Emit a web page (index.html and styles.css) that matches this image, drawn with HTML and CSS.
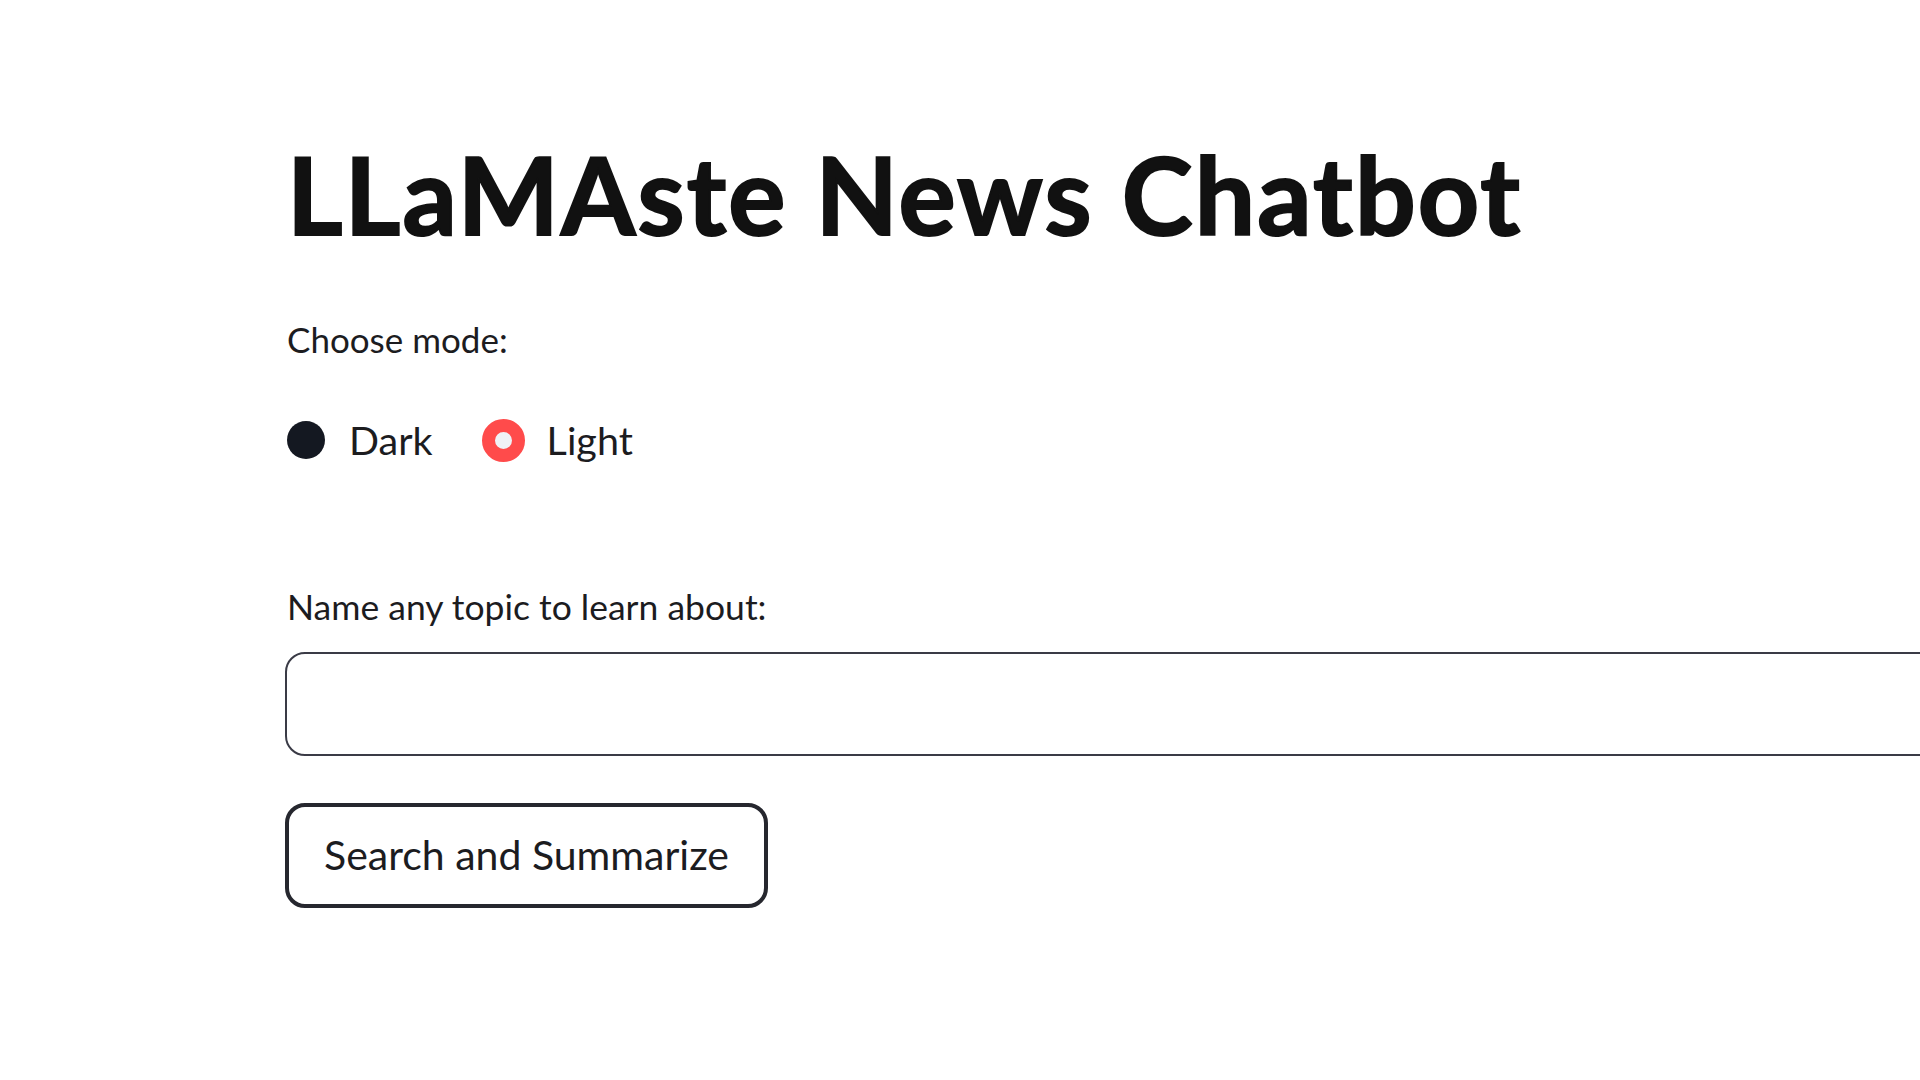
FILE: index.html
```html
<!DOCTYPE html>
<html lang="en">

<head>
    <meta charset="UTF-8">
    <title>LLaMAste News Chatbot</title>
    <link rel="stylesheet" href="styles.css">
</head>

<body>
    <div class="main">
        <h1 class="title">LLaMAste News Chatbot</h1>

        <div class="field mode-field">
            <div class="label">Choose mode:</div>
            <div class="radio-group">
                <label class="radio">
                    <span class="dot"></span>
                    <span class="radio-text">Dark</span>
                </label>
                <label class="radio checked">
                    <span class="dot"></span>
                    <span class="radio-text">Light</span>
                </label>
            </div>
        </div>

        <div class="field topic-field">
            <div class="label">Name any topic to learn about:</div>
            <input class="text-input" type="text">
        </div>

        <button class="btn">Search and Summarize</button>
    </div>
</body>

</html>
```

FILE: styles.css
```css
*,
*::before {
    margin: 0;
    padding: 0;
    box-sizing: border-box;
}

html,
body {
    width: 100%;
    height: 100%;
    overflow: hidden;
    background: #fff;
}

body {
    font-family: Lato, "Noto Sans", sans-serif;
    color: #1c1c1f;
}

.main {
    padding: 130px 0 0 285px;
    width: 2100px;
}

.title {
    font-size: 107px;
    line-height: 1.2;
    font-weight: 700;
    color: #111;
    padding-left: 2px;
    letter-spacing: 2.15px;
    -webkit-text-stroke: 2px #111;
}

.label {
    font-size: 35px;
    line-height: 42px;
    padding-left: 2px;
}

.mode-field {
    margin-top: 60px;
}

.radio-group {
    display: flex;
    align-items: center;
    gap: 50px;
    height: 44px;
    margin-top: 58px;
}

.radio {
    display: flex;
    align-items: center;
    gap: 22px;
}

.dot {
    flex: none;
    width: 42px;
    height: 42px;
    display: flex;
    align-items: center;
    justify-content: center;
}

.dot::before {
    content: "";
    flex: none;
    width: 38px;
    height: 38px;
    border-radius: 50%;
    background: #141821;
}

.checked .dot::before {
    width: 43px;
    height: 43px;
    background: #f0f2f6;
    border: 13.5px solid #ff4b4b;
}

.radio-text {
    font-size: 39.5px;
    line-height: 44px;
}

.topic-field {
    margin-top: 124px;
}

.topic-field .label {
    font-size: 35.5px;
    line-height: 41px;
}

.text-input {
    display: block;
    margin-top: 25px;
    width: 1700px;
    height: 104px;
    border: 2px solid #3a3b46;
    border-radius: 20px;
    background: #fff;
    outline: none;
}

.btn {
    display: block;
    margin-top: 47px;
    width: 483px;
    height: 105px;
    padding-bottom: 3px;
    border: 4px solid #26272e;
    border-radius: 20px;
    background: #fff;
    font-family: inherit;
    font-size: 41px;
    color: #1c1c1f;
}
```
